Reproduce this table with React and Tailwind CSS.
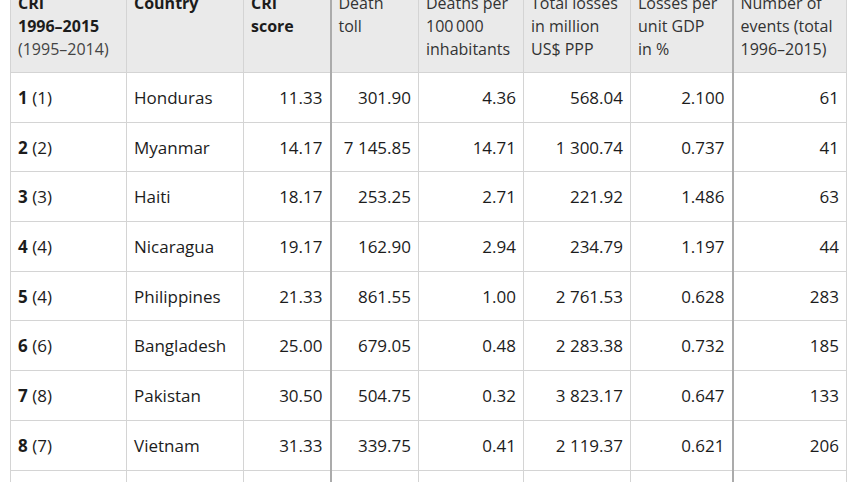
import React from 'react';

const rows = [
  ['1', '(1)', 'Honduras', '11.33', '301.90', '4.36', '568.04', '2.100', '61'],
  ['2', '(2)', 'Myanmar', '14.17', '7\u00a0145.85', '14.71', '1\u00a0300.74', '0.737', '41'],
  ['3', '(3)', 'Haiti', '18.17', '253.25', '2.71', '221.92', '1.486', '63'],
  ['4', '(4)', 'Nicaragua', '19.17', '162.90', '2.94', '234.79', '1.197', '44'],
  ['5', '(4)', 'Philippines', '21.33', '861.55', '1.00', '2\u00a0761.53', '0.628', '283'],
  ['6', '(6)', 'Bangladesh', '25.00', '679.05', '0.48', '2\u00a0283.38', '0.732', '185'],
  ['7', '(8)', 'Pakistan', '30.50', '504.75', '0.32', '3\u00a0823.17', '0.647', '133'],
  ['8', '(7)', 'Vietnam', '31.33', '339.75', '0.41', '2\u00a0119.37', '0.621', '206'],
  ['9', '(10)', 'Thailand', '34.83', '140.00', '0.21', '7\u00a0574.62', '0.984', '136'],
];

const cell = 'border border-[#d4d4d4] px-[7px] align-middle';
const thick = 'border-l-2 border-l-[#ababab]';
const head = 'pt-[8px] align-top';

export default function App() {
  return (
    <div className="h-[482px] w-[857px] overflow-hidden bg-white font-['Open_Sans',sans-serif] text-[16px] leading-[23px] text-[#1c1c1c]">
      <table className="ml-[10px] mt-[-17px] w-[836px] table-fixed border-collapse">
        <colgroup>
          <col className="w-[116px]" />
          <col className="w-[117px]" />
          <col className="w-[87px]" />
          <col className="w-[88px]" />
          <col className="w-[105px]" />
          <col className="w-[107px]" />
          <col className="w-[102px]" />
          <col className="w-[114px]" />
        </colgroup>
        <thead>
          <tr className="h-[89px] bg-[#eaeaea] text-left align-top">
            <th className={`${cell} ${head} font-normal`}>
              <span className="font-bold">CRI<br />1996–2015</span><br />
              <span className="text-[#444]">(1995–2014)</span>
            </th>
            <th className={`${cell} ${head} font-bold`}>Country</th>
            <th className={`${cell} ${head} font-bold`}>CRI<br />score</th>
            <th className={`${cell} ${thick} ${head} font-normal text-[#333]`}>Death<br />toll</th>
            <th className={`${cell} ${head} font-normal text-[#333]`}>Deaths per<br />100&#8201;000<br />inhabitants</th>
            <th className={`${cell} ${head} font-normal text-[#333]`}>Total losses<br />in million<br />US$ PPP</th>
            <th className={`${cell} ${head} font-normal text-[#333]`}>Losses per<br />unit GDP<br />in %</th>
            <th className={`${cell} ${thick} ${head} font-normal text-[#333]`}>Number of<br />events (total<br />1996–2015)</th>
          </tr>
        </thead>
        <tbody className="text-[17px]">
          {rows.map((r) => (
            <tr key={r[2]} className="h-[49.7px]">
              <td className={cell}>
                <span className="font-bold">{r[0]}</span> {r[1]}
              </td>
              <td className={cell}>{r[2]}</td>
              <td className={`${cell} text-right`}>{r[3]}</td>
              <td className={`${cell} ${thick} text-right`}>{r[4]}</td>
              <td className={`${cell} text-right`}>{r[5]}</td>
              <td className={`${cell} text-right`}>{r[6]}</td>
              <td className={`${cell} text-right`}>{r[7]}</td>
              <td className={`${cell} ${thick} text-right`}>{r[8]}</td>
            </tr>
          ))}
        </tbody>
      </table>
    </div>
  );
}
